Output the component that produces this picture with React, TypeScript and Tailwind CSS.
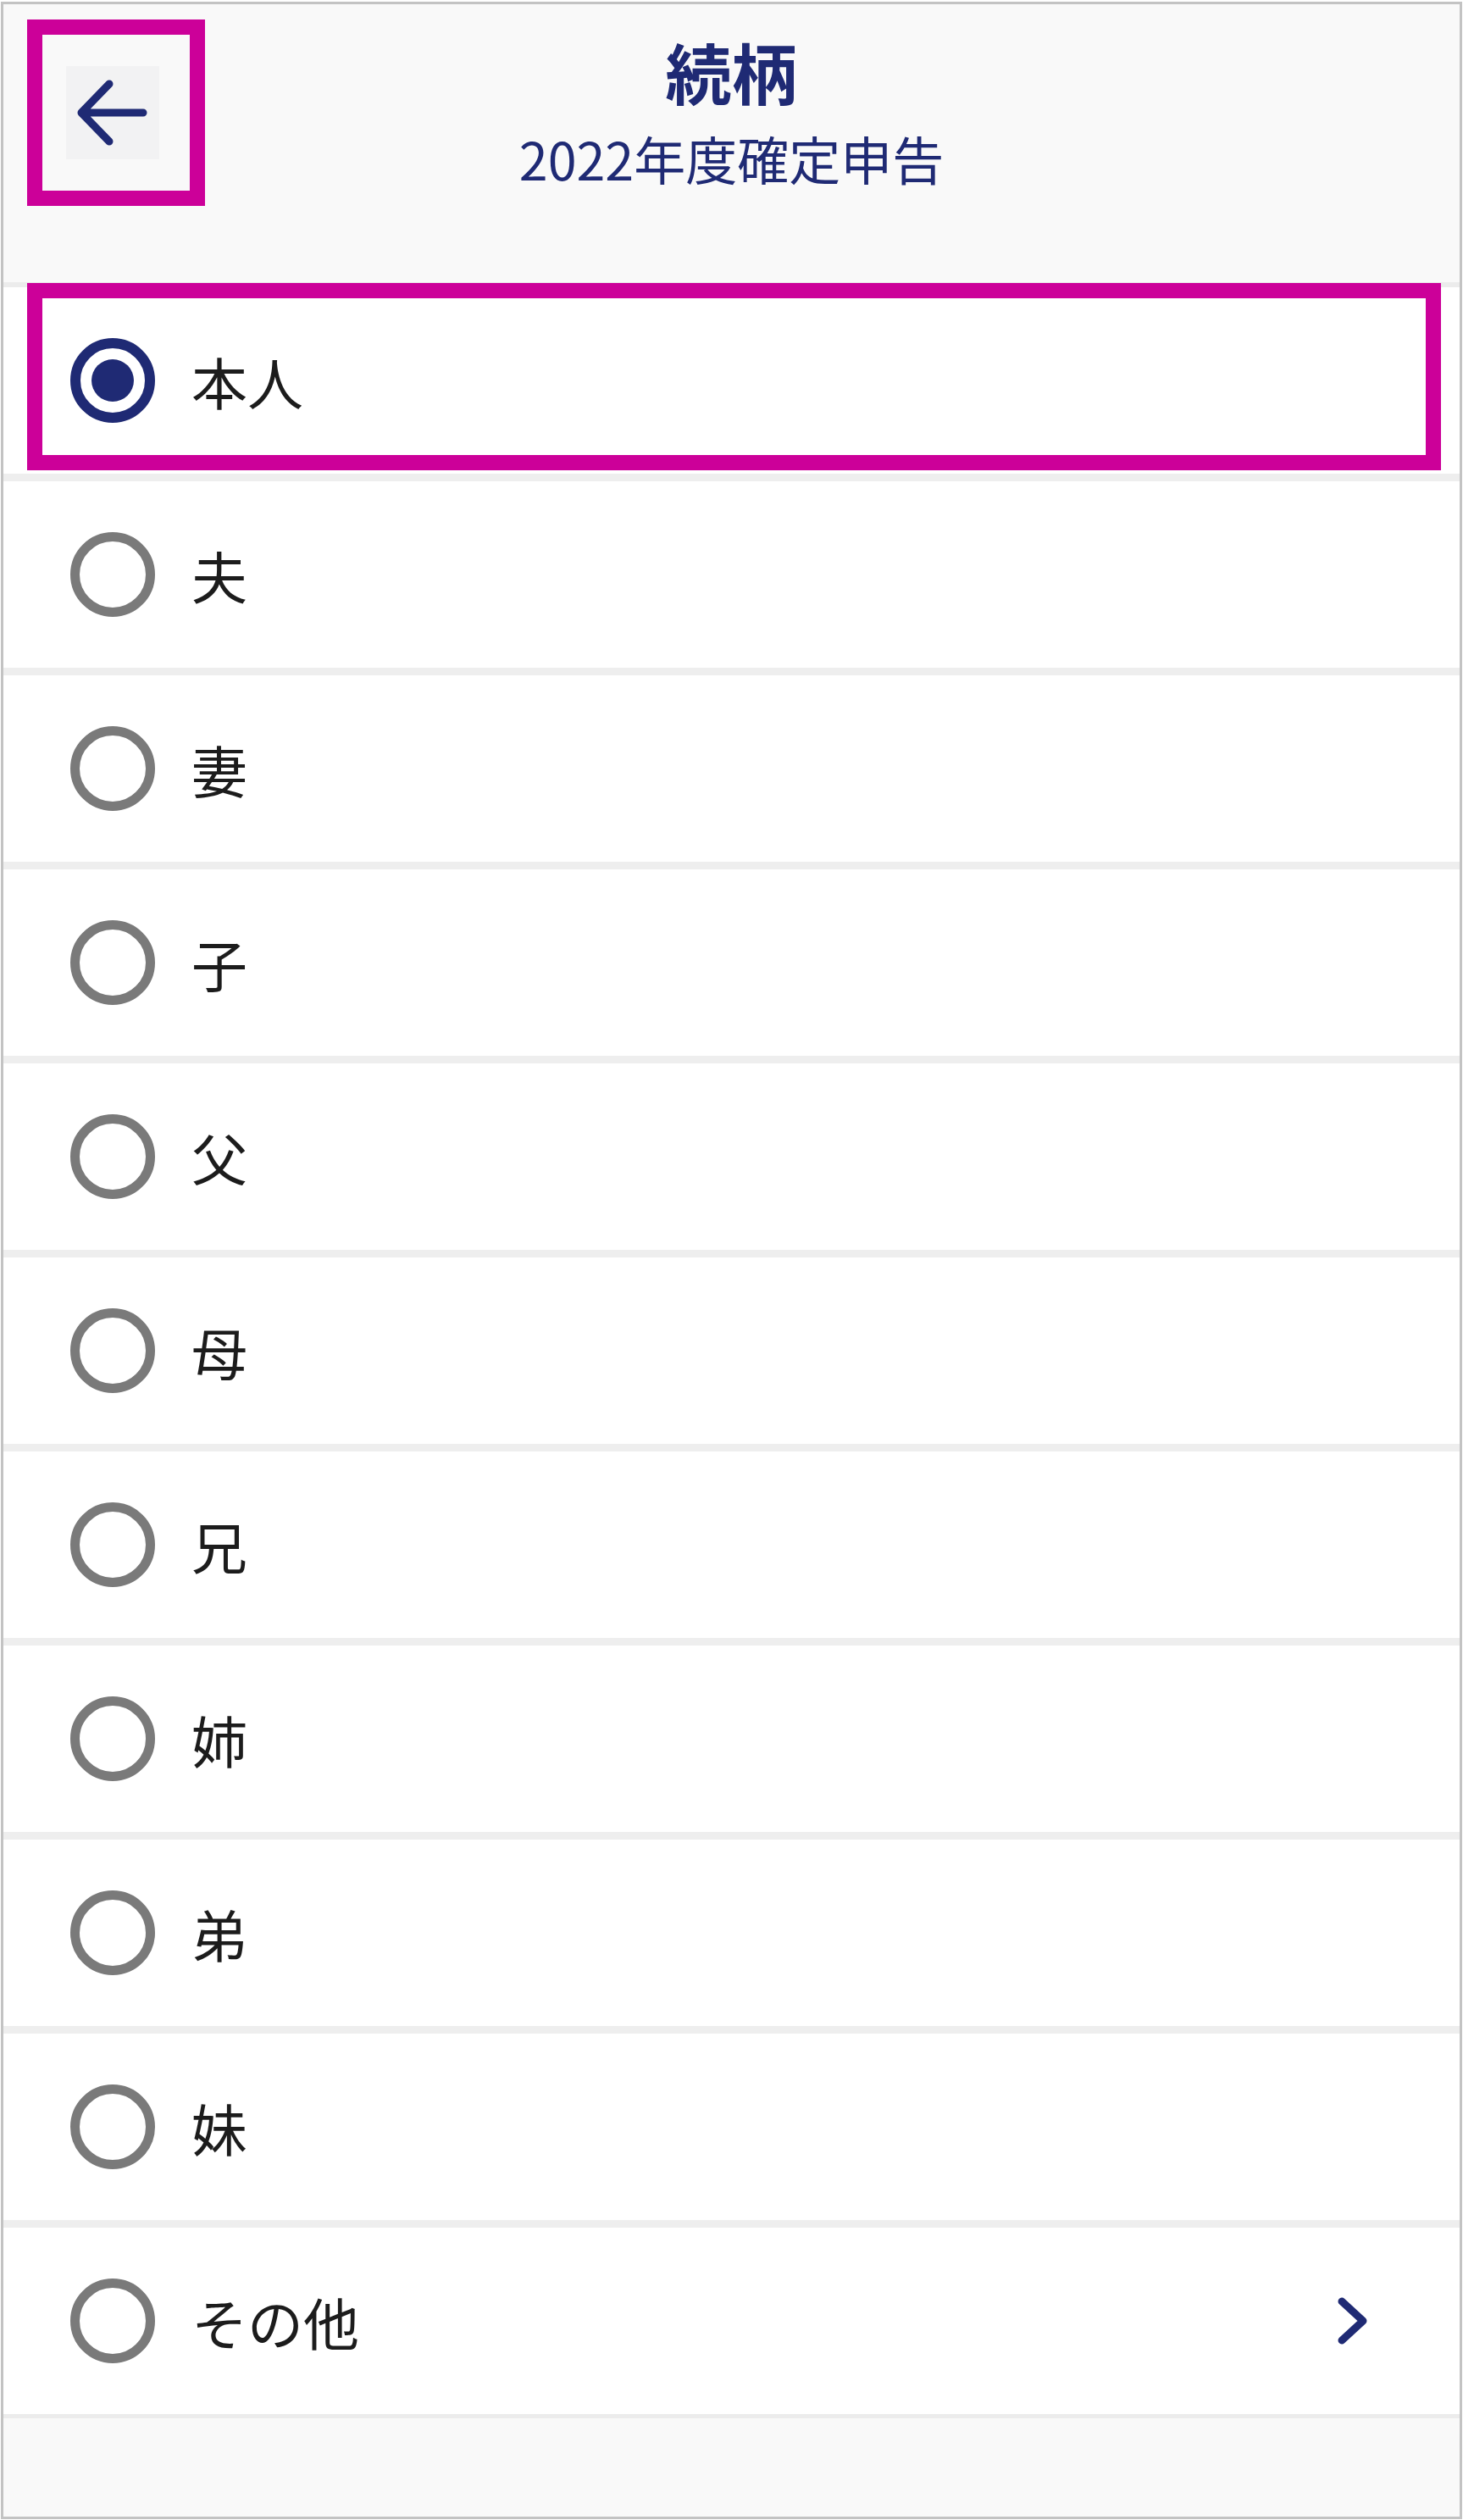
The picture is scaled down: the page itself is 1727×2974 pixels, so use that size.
import React from "react";

const NAVY = "#1f2a74";

const options = ["本人", "夫", "妻", "子", "父", "母", "兄", "姉", "弟", "妹", "その他"];

const Radio: React.FC<{ checked: boolean }> = ({ checked }) =>
  checked ? (
    <span className="flex h-[100px] w-[100px] shrink-0 items-center justify-center rounded-full border-[12px] border-[#1f2a74]">
      <span className="h-[50px] w-[50px] rounded-full bg-[#1f2a74]" />
    </span>
  ) : (
    <span className="block h-[100px] w-[100px] shrink-0 rounded-full border-[11px] border-[#7a7a7a]" />
  );

const OptionRow: React.FC<{ label: string; checked: boolean; hasNext?: boolean }> = ({
  label,
  checked,
  hasNext,
}) => (
  <div className="flex h-[220px] items-center bg-white pl-[79px] pr-[107px]">
    <Radio checked={checked} />
    <span className="ml-[43px] text-[66px] leading-none text-[#1c1c1c]">{label}</span>
    {hasNext && (
      <svg className="ml-auto" width="40" height="60" viewBox="0 0 40 60" fill="none">
        <polyline
          points="8,7 33,30 8,53"
          stroke={NAVY}
          strokeWidth="9"
          strokeLinecap="round"
          strokeLinejoin="round"
        />
      </svg>
    )}
  </div>
);

export default function App() {
  return (
    <div
      className="relative h-[2974px] w-[1727px] bg-white pl-[1px] pt-[2px]"
      style={{ fontFamily: '"Noto Sans CJK JP", "Noto Sans", sans-serif' }}
    >
      <div className="flex h-[2971px] w-[1725px] flex-col border-[3px] border-[#c3c3c3] bg-[#f9f9f9]">
        {/* header */}
        <header className="grid h-[328px] grid-cols-[1fr_auto_1fr] bg-[#f9f9f9]">
          <div>
            <button className="ml-[74px] mt-[73px] flex h-[110px] w-[110px] items-center justify-center bg-[#f2f2f3]">
              <svg width="110" height="110" viewBox="0 0 110 110" fill="none">
                <path
                  d="M18 55 H91 M51 21 L18 55 L51 89"
                  stroke={NAVY}
                  strokeWidth="9"
                  strokeLinecap="round"
                  strokeLinejoin="round"
                />
              </svg>
            </button>
          </div>
          <div className="flex flex-col items-center pt-[32px] text-[#1f2a74]">
            <h1 className="text-[78px] font-bold leading-[94px]">続柄</h1>
            <p className="mt-[20px] text-[61px] leading-[72px]">2022年度確定申告</p>
          </div>
          <div />
        </header>
        <div className="h-[6px] bg-[#ececec]" />

        {/* options */}
        <div className="flex flex-col gap-[9px] bg-[#eeeeee]">
          {options.map((opt, i) => (
            <OptionRow key={opt} label={opt} checked={i === 0} hasNext={opt === "その他"} />
          ))}
        </div>
        <div className="h-[5px] bg-[#ececec]" />
        <div className="flex-1 bg-[#f9f9f9]" />
      </div>

      {/* annotation boxes */}
      <div className="absolute left-[32px] top-[23px] h-[220px] w-[210px] border-[18px] border-[#cc0099]" />
      <div className="absolute left-[32px] top-[334px] h-[221px] w-[1669px] border-[18px] border-[#cc0099]" />
    </div>
  );
}
